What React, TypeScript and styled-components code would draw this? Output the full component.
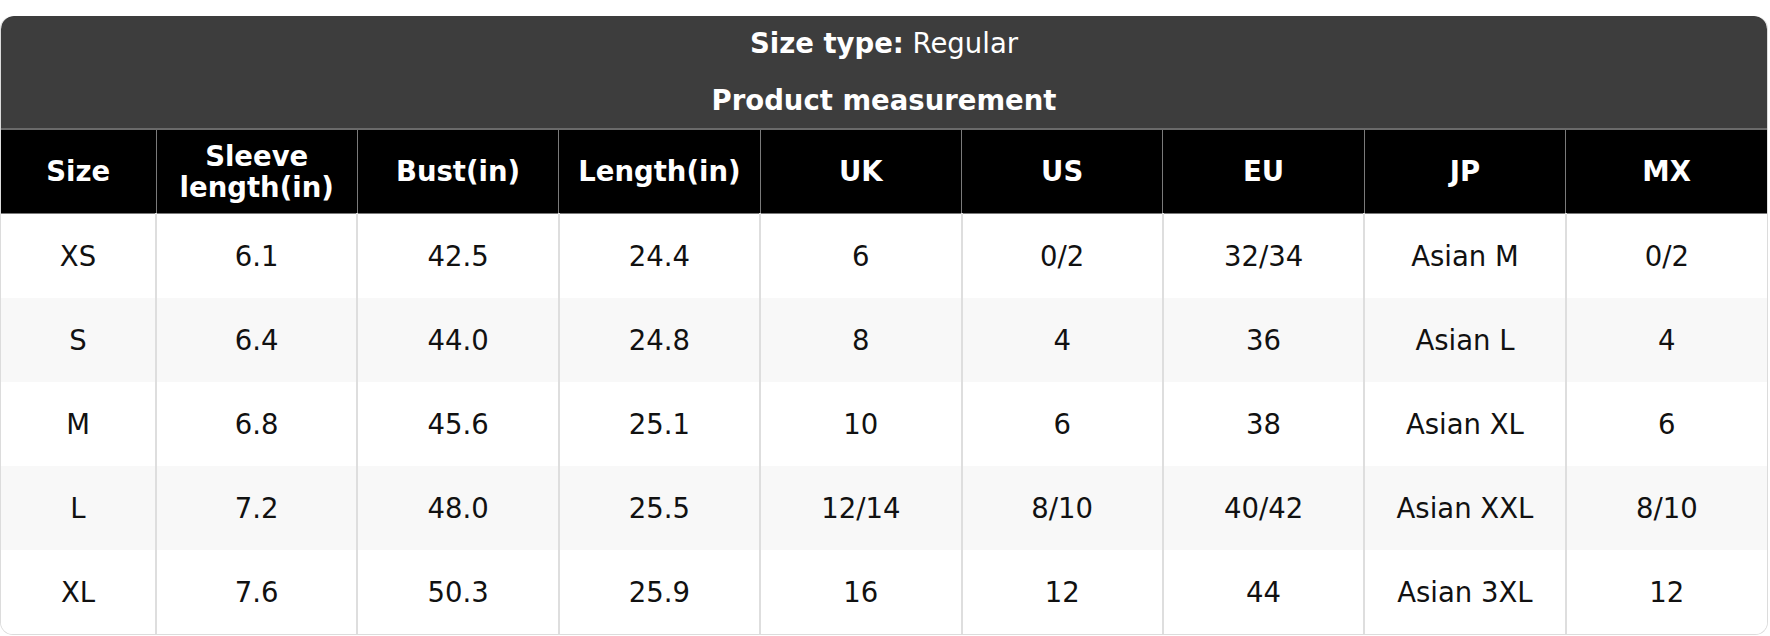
import React from "react";
import styled, { createGlobalStyle } from "styled-components";

const GlobalStyle = createGlobalStyle`
  body {
    margin: 0;
    background: #fff;
    font-family: "DejaVu Sans", "Liberation Sans", sans-serif;
  }
`;

interface Row {
  size: string;
  sleeve: string;
  bust: string;
  length: string;
  uk: string;
  us: string;
  eu: string;
  jp: string;
  mx: string;
}

const rows: Row[] = [
  { size: "XS", sleeve: "6.1", bust: "42.5", length: "24.4", uk: "6", us: "0/2", eu: "32/34", jp: "Asian M", mx: "0/2" },
  { size: "S", sleeve: "6.4", bust: "44.0", length: "24.8", uk: "8", us: "4", eu: "36", jp: "Asian L", mx: "4" },
  { size: "M", sleeve: "6.8", bust: "45.6", length: "25.1", uk: "10", us: "6", eu: "38", jp: "Asian XL", mx: "6" },
  { size: "L", sleeve: "7.2", bust: "48.0", length: "25.5", uk: "12/14", us: "8/10", eu: "40/42", jp: "Asian XXL", mx: "8/10" },
  { size: "XL", sleeve: "7.6", bust: "50.3", length: "25.9", uk: "16", us: "12", eu: "44", jp: "Asian 3XL", mx: "12" },
];

const columns: { key: keyof Row; label: React.ReactNode }[] = [
  { key: "size", label: "Size" },
  { key: "sleeve", label: <>Sleeve<br />length(in)</> },
  { key: "bust", label: "Bust(in)" },
  { key: "length", label: "Length(in)" },
  { key: "uk", label: "UK" },
  { key: "us", label: "US" },
  { key: "eu", label: "EU" },
  { key: "jp", label: "JP" },
  { key: "mx", label: "MX" },
];

const App = () => {
  return (
    <>
      <GlobalStyle />
      <Page>
        <Card>
          <Caption>
            <CaptionLine>
              <strong>Size type:</strong> Regular
            </CaptionLine>
            <CaptionLine>
              <strong>Product measurement</strong>
            </CaptionLine>
          </Caption>
          <Table>
            <colgroup>
              <col style={{ width: 155 }} />
              {columns.slice(1).map((c) => (
                <col key={c.key} />
              ))}
            </colgroup>
            <thead>
              <tr>
                {columns.map((c) => (
                  <HeadCell key={c.key}>{c.label}</HeadCell>
                ))}
              </tr>
            </thead>
            <tbody>
              {rows.map((r, i) => (
                <BodyRow key={r.size} striped={i % 2 === 1}>
                  {columns.map((c) => (
                    <Cell key={c.key}>{r[c.key]}</Cell>
                  ))}
                </BodyRow>
              ))}
            </tbody>
          </Table>
        </Card>
      </Page>
    </>
  );
};

const Page = styled.div`
  padding-top: 16px;
  width: 1768px;
`;

const Card = styled.div`
  border: 1px solid #dcdcdc;
  border-top: none;
  border-radius: 13px;
  overflow: hidden;
`;

const Caption = styled.div`
  background: #3d3d3d;
  color: #fff;
  display: flex;
  flex-direction: column;
  align-items: center;
  gap: 17px;
  padding: 7px 0 8px;
  font-size: 27.5px;
  border-radius: 13px 13px 0 0;
`;

const CaptionLine = styled.div`
  line-height: 40px;
  strong {
    font-weight: bold;
  }
`;

const Table = styled.table`
  width: 100%;
  border-collapse: collapse;
  table-layout: fixed;
  font-size: 27.5px;
`;

const HeadCell = styled.th`
  background: #000;
  color: #fff;
  font-weight: bold;
  height: 83px;
  padding: 0 8px;
  line-height: 31px;
  text-align: center;
  border: 1px solid #7a7a7a;
  border-top: 2px solid #6a6a6a;
  &:first-child {
    border-left: none;
  }
  &:last-child {
    border-right: none;
  }
`;

const BodyRow = styled.tr<{ striped: boolean }>`
  background: ${({ striped }) => (striped ? "#f8f8f8" : "#fff")};
`;

const Cell = styled.td`
  height: 84px;
  padding: 0 8px;
  text-align: center;
  color: #111;
  border-left: 2px solid #dedede;
  &:first-child {
    border-left: none;
  }
`;

export default App;
